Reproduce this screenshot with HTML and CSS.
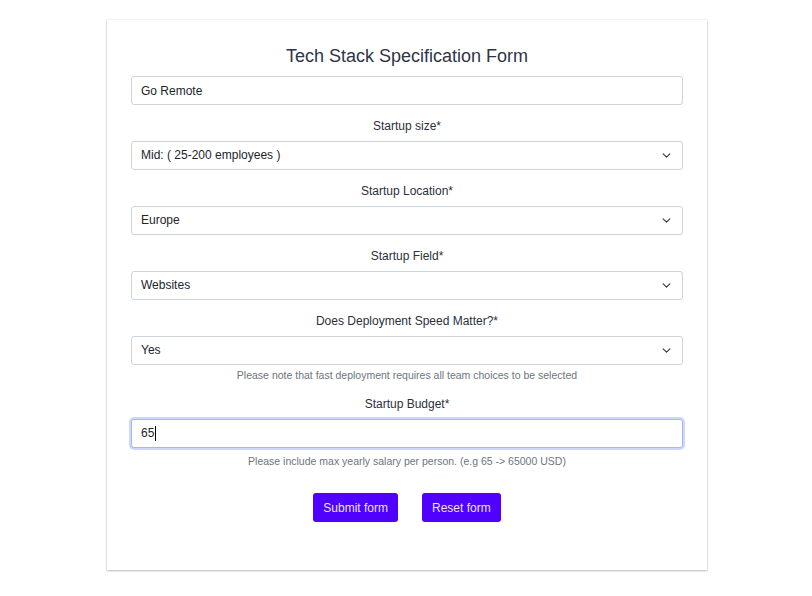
FILE: index.html
```html
<!DOCTYPE html>
<html lang="en">
<head>
<meta charset="utf-8">
<title>Tech Stack Specification Form</title>
<link rel="stylesheet" href="styles.css">
</head>
<body>
<main class="card">
  <h1 class="title">Tech Stack Specification Form</h1>
  <form class="form">
    <input class="control" type="text" value="Go Remote">

    <label class="label">Startup size*</label>
    <select class="control select">
      <option>Mid: ( 25-200 employees )</option>
    </select>

    <label class="label">Startup Location*</label>
    <select class="control select">
      <option>Europe</option>
    </select>

    <label class="label">Startup Field*</label>
    <select class="control select">
      <option>Websites</option>
    </select>

    <label class="label">Does Deployment Speed Matter?*</label>
    <select class="control select">
      <option>Yes</option>
    </select>
    <p class="help help-tight">Please note that fast deployment requires all team choices to be selected</p>

    <label class="label">Startup Budget*</label>
    <div class="control focused"><span class="value">65</span><span class="caret"></span></div>
    <p class="help help-loose">Please include max yearly salary per person. (e.g 65 -&gt; 65000 USD)</p>

    <div class="actions">
      <button type="button" class="btn">Submit form</button>
      <button type="button" class="btn">Reset form</button>
    </div>
  </form>
</main>
</body>
</html>
```

FILE: styles.css
```css
* { box-sizing: border-box; }

html, body {
  margin: 0;
  padding: 0;
  background: #fff;
}

body {
  font-family: "Liberation Sans", Arial, sans-serif;
  color: #212529;
  padding: 20px 0 26px 2px;
}

.card {
  width: 600px;
  margin: 0 auto;
  padding: 24px 24px 48px;
  background: #fff;
  box-shadow: 0 1px 2px rgba(0, 0, 0, 0.25), 0 0 0 1px rgba(0, 0, 0, 0.04);
}

.title {
  margin: 0 0 8px;
  font-size: 18px;
  line-height: 24px;
  font-weight: 400;
  text-align: center;
  color: #2f3446;
}

.form {
  display: flex;
  flex-direction: column;
}

.control {
  display: block;
  width: 100%;
  height: 29px;
  margin: 0;
  padding: 0 9px;
  font-family: inherit;
  font-size: 12px;
  line-height: 27px;
  color: #212529;
  background: #fff;
  border: 1px solid #ced4da;
  border-radius: 3px;
  outline: none;
}

.select {
  appearance: none;
  -webkit-appearance: none;
  background-image: url("data:image/svg+xml,%3csvg xmlns='http://www.w3.org/2000/svg' viewBox='0 0 16 16'%3e%3cpath fill='none' stroke='%23343a40' stroke-linecap='round' stroke-linejoin='round' stroke-width='2' d='M2 5l6 6 6-6'/%3e%3c/svg%3e");
  background-repeat: no-repeat;
  background-position: right 11px center;
  background-size: 9px 9px;
}

.label {
  display: block;
  margin: 11px 0 5px;
  font-size: 12px;
  line-height: 20px;
  text-align: center;
  color: #2b2f3a;
}

.help {
  margin: 0;
  font-size: 10.5px;
  line-height: 16px;
  text-align: center;
  color: #6c757d;
}

.help-tight { margin-top: 2px; }
.help-loose { margin-top: 5px; }

.focused {
  display: flex;
  align-items: center;
  border-color: #a9b4ff;
  box-shadow: 0 0 0 2px rgba(120, 140, 255, 0.35);
}

.caret {
  display: inline-block;
  width: 1px;
  height: 15px;
  margin-left: 1px;
  background: #000;
}

.actions {
  display: flex;
  justify-content: center;
  gap: 24px;
  margin-top: 24px;
}

.btn {
  height: 29px;
  padding: 0 10px;
  font-family: inherit;
  font-size: 12px;
  color: #e8e6ff;
  background: #5000ff;
  border: none;
  border-radius: 3px;
  cursor: pointer;
}
```
